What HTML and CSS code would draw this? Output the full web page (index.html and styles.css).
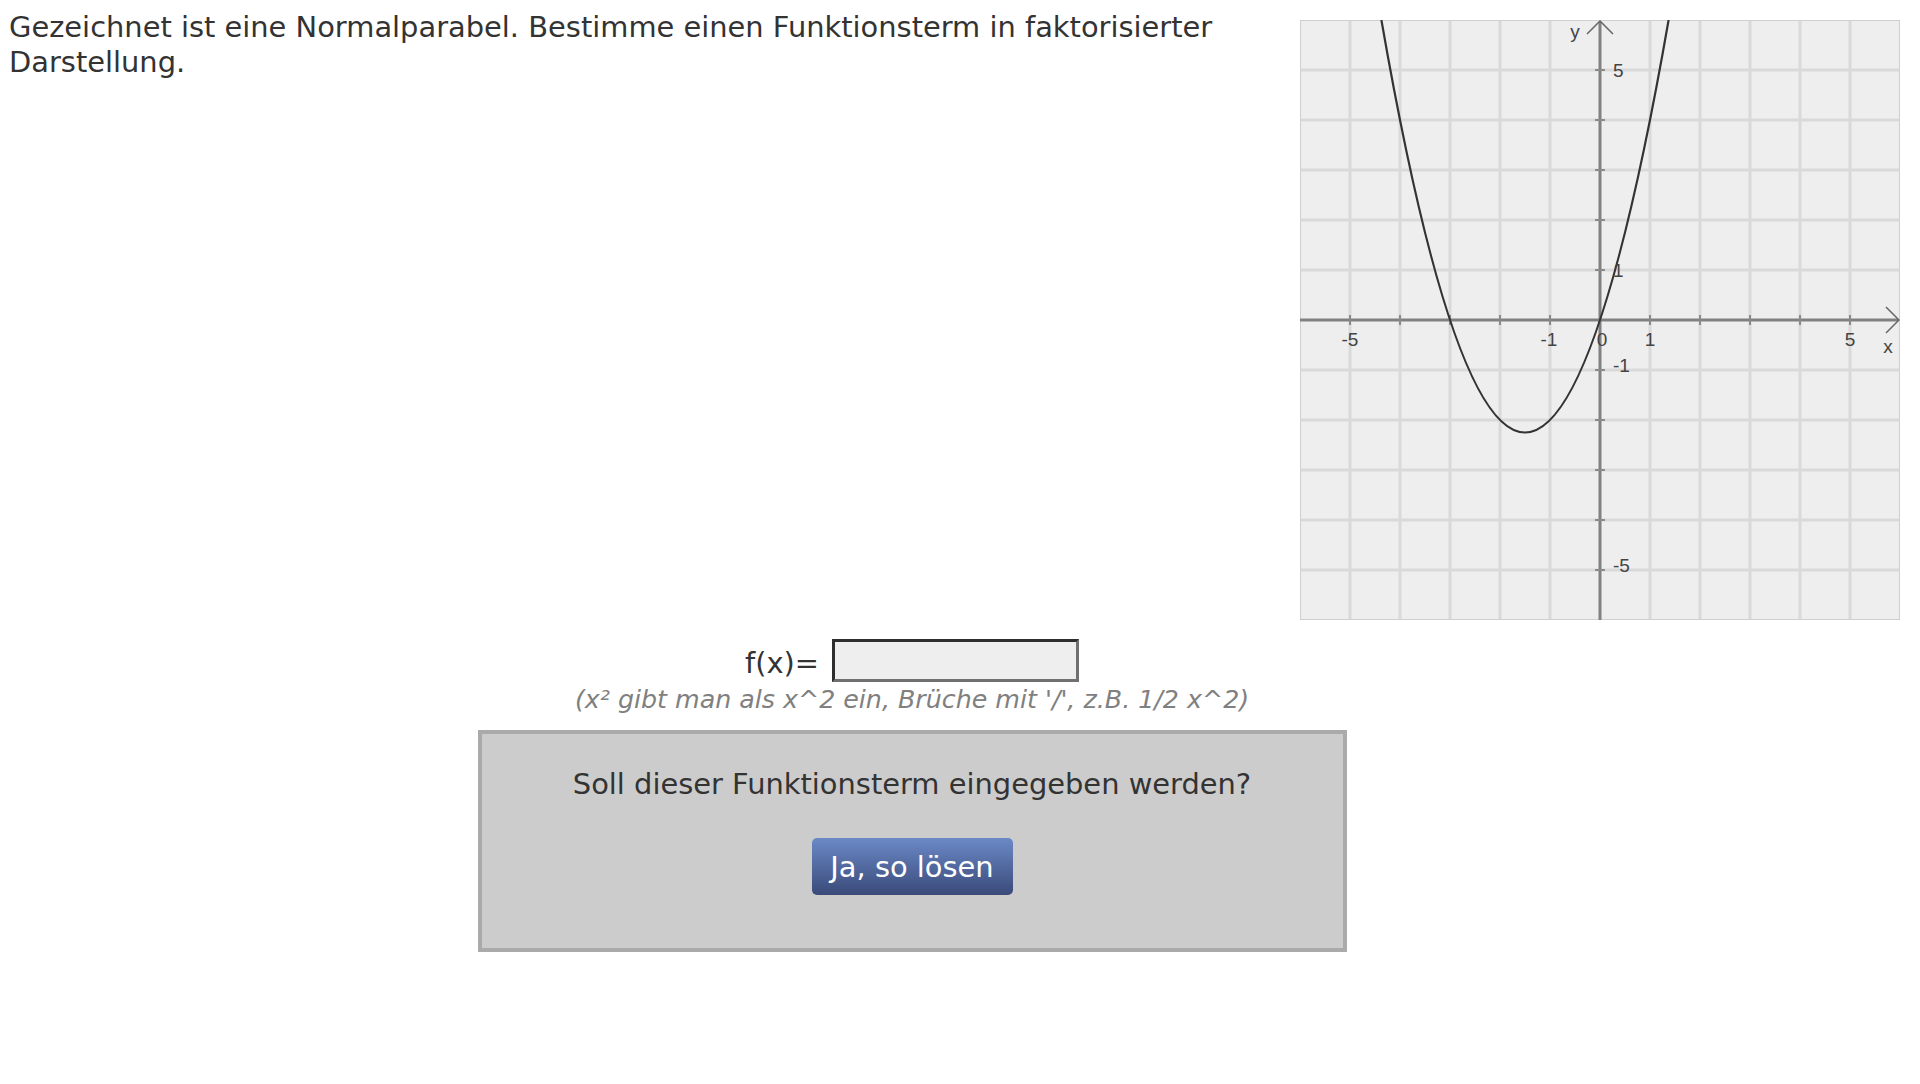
FILE: index.html
```html
<!DOCTYPE html>
<html lang="de">
<head>
<meta charset="utf-8">
<title>Normalparabel</title>
<link rel="stylesheet" href="styles.css">
</head>
<body>
<div class="top">
  <p class="task">Gezeichnet ist eine Normalparabel. Bestimme einen Funktionsterm in faktorisierter Darstellung.</p>
  <div class="graph">
    <svg width="600" height="600" viewBox="0 0 600 600" xmlns="http://www.w3.org/2000/svg">
      <rect x="0" y="0" width="600" height="600" fill="#eeeeee"/>
      <g stroke="#d9d9d9" stroke-width="3">
        <line x1="50" y1="0" x2="50" y2="600"/>
        <line x1="100" y1="0" x2="100" y2="600"/>
        <line x1="150" y1="0" x2="150" y2="600"/>
        <line x1="200" y1="0" x2="200" y2="600"/>
        <line x1="250" y1="0" x2="250" y2="600"/>
        <line x1="350" y1="0" x2="350" y2="600"/>
        <line x1="400" y1="0" x2="400" y2="600"/>
        <line x1="450" y1="0" x2="450" y2="600"/>
        <line x1="500" y1="0" x2="500" y2="600"/>
        <line x1="550" y1="0" x2="550" y2="600"/>
        <line x1="0" y1="50" x2="600" y2="50"/>
        <line x1="0" y1="100" x2="600" y2="100"/>
        <line x1="0" y1="150" x2="600" y2="150"/>
        <line x1="0" y1="200" x2="600" y2="200"/>
        <line x1="0" y1="250" x2="600" y2="250"/>
        <line x1="0" y1="350" x2="600" y2="350"/>
        <line x1="0" y1="400" x2="600" y2="400"/>
        <line x1="0" y1="450" x2="600" y2="450"/>
        <line x1="0" y1="500" x2="600" y2="500"/>
        <line x1="0" y1="550" x2="600" y2="550"/>
      </g>
      <rect x="0.5" y="0.5" width="599" height="599" fill="none" stroke="#d0d0d0" stroke-width="1"/>
      <g stroke="#808080" stroke-width="3">
        <line x1="0" y1="300" x2="598" y2="300"/>
        <line x1="300" y1="2" x2="300" y2="600"/>
      </g>
      <g stroke="#8a8a8a" stroke-width="2">
        <line x1="50" y1="295" x2="50" y2="305"/>
        <line x1="100" y1="295" x2="100" y2="305"/>
        <line x1="150" y1="295" x2="150" y2="305"/>
        <line x1="200" y1="295" x2="200" y2="305"/>
        <line x1="250" y1="295" x2="250" y2="305"/>
        <line x1="350" y1="295" x2="350" y2="305"/>
        <line x1="400" y1="295" x2="400" y2="305"/>
        <line x1="450" y1="295" x2="450" y2="305"/>
        <line x1="500" y1="295" x2="500" y2="305"/>
        <line x1="550" y1="295" x2="550" y2="305"/>
        <line x1="295" y1="50" x2="305" y2="50"/>
        <line x1="295" y1="100" x2="305" y2="100"/>
        <line x1="295" y1="150" x2="305" y2="150"/>
        <line x1="295" y1="200" x2="305" y2="200"/>
        <line x1="295" y1="250" x2="305" y2="250"/>
        <line x1="295" y1="350" x2="305" y2="350"/>
        <line x1="295" y1="400" x2="305" y2="400"/>
        <line x1="295" y1="450" x2="305" y2="450"/>
        <line x1="295" y1="500" x2="305" y2="500"/>
        <line x1="295" y1="550" x2="305" y2="550"/>
      </g>
      <g stroke="#666666" stroke-width="1.5" fill="none">
        <polyline points="287,14 300,1 313,14"/>
        <polyline points="586,287 599,300 586,313"/>
      </g>
      <path d="M81.4 0 Q225 825 368.6 0" fill="none" stroke="#333333" stroke-width="2.2"/>
      <g class="lbl" fill="#444444">
        <text x="275" y="18" text-anchor="middle">y</text>
        <text x="588" y="333" text-anchor="middle">x</text>
        <text x="313" y="57">5</text>
        <text x="313" y="257">1</text>
        <text x="313" y="352">-1</text>
        <text x="313" y="552">-5</text>
        <text x="50" y="326" text-anchor="middle">-5</text>
        <text x="249" y="326" text-anchor="middle">-1</text>
        <text x="302" y="326" text-anchor="middle">0</text>
        <text x="350" y="326" text-anchor="middle">1</text>
        <text x="550" y="326" text-anchor="middle">5</text>
      </g>
    </svg>
  </div>
</div>
<div class="center">
  <div class="fx-row">
    <span class="fx-label">f(x)=</span>
    <input class="fx-input" type="text" aria-label="f(x)">
  </div>
  <div class="hint">(x² gibt man als x^2 ein, Brüche mit '/', z.B. 1/2 x^2)</div>
  <div class="confirm">
    <p class="confirm-text">Soll dieser Funktionsterm eingegeben werden?</p>
    <button class="solve-btn" type="button">Ja, so lösen</button>
  </div>
</div>
</body>
</html>
```

FILE: styles.css
```css
html, body {
  margin: 0;
  padding: 0;
  background: #ffffff;
}

body {
  font-family: "DejaVu Sans", Verdana, sans-serif;
  font-size: 28.9px;
  color: #333333;
}

.top {
  display: flex;
  justify-content: space-between;
  align-items: flex-start;
}

.task {
  margin: 0;
  padding: 10px 0 0 9px;
  width: 1270px;
  line-height: 35px;
}

.graph {
  flex: none;
  width: 600px;
  height: 600px;
  margin: 20px 20px 0 0;
}

.graph svg {
  display: block;
}

.lbl {
  font-family: "Liberation Sans", Arial, sans-serif;
  font-size: 19px;
}

.center {
  width: 1824px;
  display: flex;
  flex-direction: column;
  align-items: center;
}

.fx-row {
  display: flex;
  align-items: flex-start;
  margin-top: 19px;
}

.fx-label {
  line-height: 43px;
  padding-top: 3px;
  margin-right: 13px;
}

.fx-input {
  box-sizing: border-box;
  width: 247px;
  height: 43px;
  margin: 0;
  padding: 0 6px;
  border: 3px solid;
  border-color: #2e2e2e #707070 #707070 #2e2e2e;
  background: #eeeeee;
  font: inherit;
}

.hint {
  font-style: italic;
  font-size: 25.3px;
  line-height: 30px;
  color: #808080;
}

.confirm {
  box-sizing: border-box;
  width: 869px;
  margin-top: 15px;
  padding: 33px 0 53px;
  border: 4px solid #aaaaaa;
  background: #cccccc;
  text-align: center;
}

.confirm-text {
  margin: 0;
  line-height: 34px;
}

.solve-btn {
  display: block;
  width: 201px;
  height: 57px;
  margin: 37px auto 0;
  padding: 0;
  border: 0;
  border-radius: 5px;
  background: linear-gradient(#6b89c7, #3a4a79);
  color: #ffffff;
  font-family: inherit;
  font-size: 28.9px;
  cursor: pointer;
}
```
